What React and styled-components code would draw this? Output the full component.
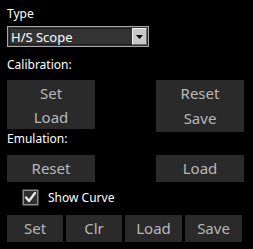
import React from "react";
import styled, { createGlobalStyle } from "styled-components";

const GlobalStyle = createGlobalStyle`
  html, body {
    margin: 0;
    padding: 0;
    background: #000;
  }
  body {
    font-family: "Noto Sans", "Open Sans", sans-serif;
  }
`;

const Panel = styled.div`
  width: 253px;
  height: 249px;
  background: #000;
  padding: 6px 9px 0 7px;
  box-sizing: border-box;
`;

const Label = styled.div`
  color: #fff;
  font-size: 12px;
  line-height: 15px;
  height: 15px;
  margin-top: ${(p) => p.$top || 0}px;
`;

const Combo = styled.div`
  margin-top: 5px;
  width: 142px;
  height: 21px;
  box-sizing: border-box;
  border: 1px solid #a8a8a8;
  background: #333;
  display: flex;
  align-items: stretch;
  padding: 1px;
`;

const ComboText = styled.div`
  flex: 1;
  color: #fff;
  font-size: 13px;
  line-height: 17px;
  padding-left: 1px;
  border: 1px solid #1a1a1a;
  border-right: none;
`;

const ComboArrow = styled.div`
  width: 15px;
  box-sizing: border-box;
  background: #c8c8c8;
  border: 1px solid;
  border-color: #f0f0f0 #6a6a6a #6a6a6a #f0f0f0;
  display: flex;
  align-items: center;
  justify-content: center;
`;

const Row = styled.div`
  display: flex;
  justify-content: space-between;
  align-items: flex-start;
  margin-top: ${(p) => p.$top || 0}px;
`;

const Button = styled.div`
  width: ${(p) => p.$w || 88}px;
  height: ${(p) => p.$h || 27}px;
  background: #2a2a2a;
  color: #b8b8b8;
  font-size: 15px;
  line-height: ${(p) => p.$lh || 27}px;
  text-align: center;
  display: flex;
  flex-direction: column;
  justify-content: center;
`;

const CheckRow = styled.div`
  display: flex;
  align-items: center;
  margin-top: 7px;
  padding-left: 15px;
  height: 17px;
  gap: 9px;
  color: #fff;
  font-size: 12px;
`;

const BottomRow = styled.div`
  display: flex;
  gap: 3px;
  margin-top: 9px;
`;

export default function App() {
  return (
    <>
      <GlobalStyle />
      <Panel>
        <Label>Type</Label>
        <Combo>
          <ComboText>H/S Scope</ComboText>
          <ComboArrow>
            <svg width="7" height="4" viewBox="0 0 7 4">
              <path d="M0 0h7L3.5 4z" fill="#000" />
            </svg>
          </ComboArrow>
        </Combo>
        <Label $top={10}>Calibration:</Label>
        <Row $top={8}>
          <Button $h={49} $lh={24}>
            <span>Set</span>
            <span>Load</span>
          </Button>
          <Button $h={52} $lh={25}>
            <span>Reset</span>
            <span>Save</span>
          </Button>
        </Row>
        <Label $top={-1}>Emulation:</Label>
        <Row $top={9}>
          <Button>Reset</Button>
          <Button>Load</Button>
        </Row>
        <CheckRow>
          <svg width="17" height="17" viewBox="0 0 17 17">
            <rect x="0.5" y="0.5" width="16" height="16" fill="#8a8a8a" />
            <rect x="2" y="2" width="13" height="13" fill="#2e2e2e" />
            <path d="M4 8.5l3 3.5 6-8" stroke="#e6e6e6" strokeWidth="2.4" fill="none" strokeLinecap="round" strokeLinejoin="round" />
          </svg>
          <span>Show Curve</span>
        </CheckRow>
        <BottomRow>
          <Button $w={56}>Set</Button>
          <Button $w={56}>Clr</Button>
          <Button $w={57}>Load</Button>
          <Button $w={57}>Save</Button>
        </BottomRow>
      </Panel>
    </>
  );
}
